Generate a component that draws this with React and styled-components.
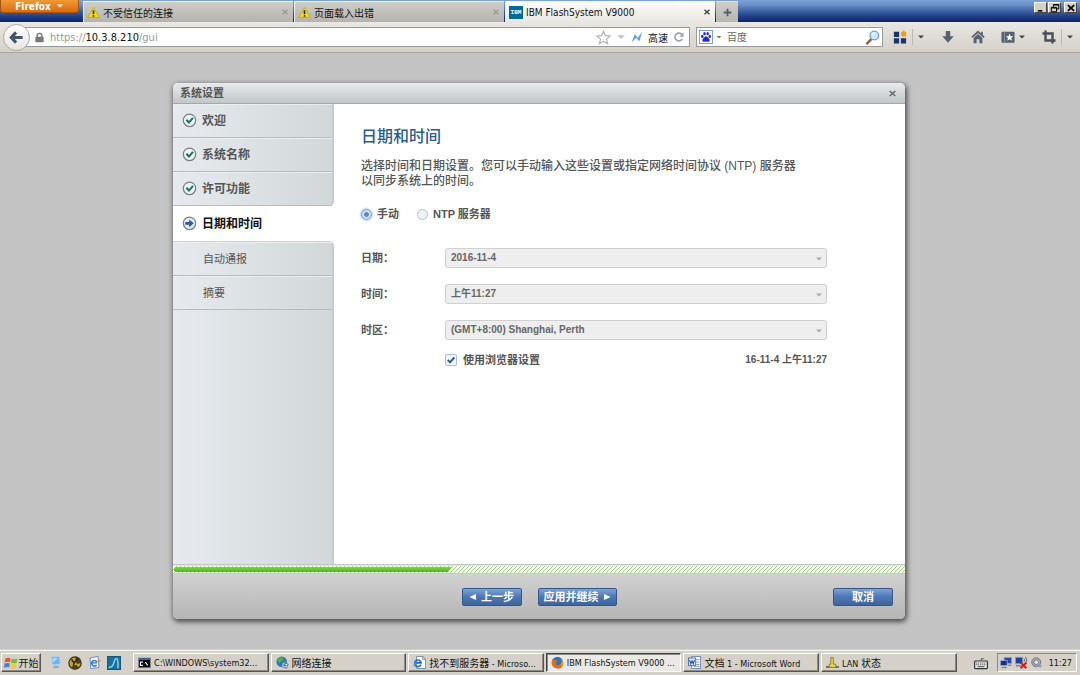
import React, { useState } from 'react';
import styled, { createGlobalStyle } from 'styled-components';

const tabs = [
	{ title: '不受信任的连接', icon: 'warning' },
	{ title: '页面载入出错', icon: 'warning' },
	{ title: 'IBM FlashSystem V9000', icon: 'ibm', active: true },
];

const doneSteps = ['欢迎', '系统名称', '许可功能'];
const nextSteps = ['自动通报', '摘要'];

const tasks = [
	{ title: 'C:\\WINDOWS\\system32...', icon: 'cmd' },
	{ title: '网络连接', icon: 'globe' },
	{ title: '找不到服务器 - Microso...', icon: 'ie' },
	{ title: 'IBM FlashSystem V9000 ...', icon: 'firefox', active: true },
	{ title: '文档 1 - Microsoft Word', icon: 'word' },
	{ title: 'LAN 状态', icon: 'lan' },
];

const icons = {
	warning: (
		<>
			<path d="M8 2 L15 14 H1 Z" fill="#f7dc1b" stroke="#c9a400" strokeLinejoin="round" />
			<path d="M8 5.5 V10" stroke="#222" strokeWidth="2" />
			<circle cx="8" cy="12.2" r="1.1" fill="#222" />
		</>
	),
	cmd: (
		<>
			<rect x="0.5" y="2.5" width="15" height="12" fill="#000" stroke="#8d97a5" />
			<rect x="1" y="3" width="14" height="2" fill="#3c6cc0" />
			<path d="M6 7.5 H3 V11.5 H6 M7.5 8.5 V9 M7.5 11 V11.5 M9 7.5 L12 11.5" stroke="#fff" strokeWidth="1.4" fill="none" />
		</>
	),
	globe: (
		<>
			<circle cx="7" cy="7" r="6.5" fill="#2b78c9" />
			<path d="M3 3 Q7 0 9 3 Q10 6 6 6 Q5 9 3 8 Q1 5 3 3 Z M9 8 L12 6 L13 9 L10 12 Z" fill="#4fb53b" />
			<path d="M8 8 L15 10 L13 15 L7 13 Z" fill="#dfe9f5" stroke="#47648c" />
			<path d="M9 10 L13 11 L12 13 L9 12 Z" fill="#2d59a8" />
		</>
	),
	ie: (
		<>
			<path d="M4.5 0.5 H12 L15.5 4 V15.5 H4.5 Z" fill="#fff" stroke="#5f718b" />
			<path d="M12 0.5 V4 H15.5" fill="none" stroke="#5f718b" />
			<path d="M9.8 10.5 A4 4 0 1 1 10 8.5 H3" fill="none" stroke="#1d6ad0" strokeWidth="2" />
			<path d="M1 13 Q0 9 9 4" fill="none" stroke="#63a7ea" />
		</>
	),
	firefox: (
		<>
			<circle cx="8" cy="8" r="7" fill="#2c75b7" />
			<path d="M2 4 Q3 6 5 5 Q8 5 8 7 Q5 7 6 10 Q8 13 11 10 Q14 7 12 3 Q16 6 15 10 Q13 16 8 15.5 Q1 15 0.7 8 Q1 5 2 4 Z" fill="#e86c13" />
			<path d="M12 3 Q17 9 12 13 Q15 8 12 3 Z" fill="#fbbf27" />
		</>
	),
	word: (
		<>
			<path d="M4.5 0.5 H15.5 V15.5 H4.5 Z" fill="#fff" stroke="#4c6da6" />
			<path d="M10 4.5 H14 M10 7.5 H14 M10 10.5 H14 M7 13 H14" stroke="#6886bd" />
			<rect x="0.5" y="2.5" width="9" height="9" fill="#e4edfb" stroke="#355a9e" />
			<path d="M2 5 L3.5 9.5 L5 6 L6.5 9.5 L8 5" fill="none" stroke="#234f9c" strokeWidth="1.3" />
		</>
	),
	lan: (
		<>
			<path d="M0 13.5 H16" stroke="#333" strokeWidth="1.5" />
			<path d="M6 2 H9 V10 H12 V14 H4 V10 H6 Z" fill="#f0d93f" stroke="#77702f" />
		</>
	),
	windows: (
		<>
			<path d="M1.5 3 Q4 1 7.5 2.5 L6.8 7.3 Q4 6 0.8 7.5 Z" fill="#e8562a" />
			<path d="M8.6 3 Q12 4.3 15.2 2.6 L14.4 7.6 Q11 9 7.9 7.8 Z" fill="#7bb83a" />
			<path d="M0.6 8.7 Q4 7.2 6.6 8.5 L5.9 13.2 Q3 12 0 13.6 Z" fill="#3f7fdc" />
			<path d="M7.7 9 Q11 10.2 14.2 8.8 L13.4 13.7 Q10 15 7 13.8 Z" fill="#f6c62b" />
		</>
	),
	desktop: (
		<>
			<path d="M3 1 L13 0.5 L14 10 L4 11 Z" fill="#6fb3ef" stroke="#b7d3ea" />
			<path d="M4 3 L11 2 L5 8 Z" fill="#b5dcfb" />
			<path d="M6 12 H13 L11 15 H5 Z" fill="#98a8ba" />
		</>
	),
	keyDisc: (
		<>
			<circle cx="8" cy="8" r="7" fill="#c9a52a" stroke="#3a3114" strokeWidth="1.4" />
			<path d="M8 1 A7 7 0 0 1 15 8 L10 9 Z M3 13 A7 7 0 0 0 13 13 L9 10 Z" fill="#4a4020" />
			<path d="M4 4 L7 8 L11 3 M7 8 L6 12" stroke="#2c2610" strokeWidth="1.8" fill="none" />
		</>
	),
	mail: (
		<>
			<path d="M2.5 2.5 L12.5 0.5 L13.5 14 L3.5 15.5 Z" fill="#f3f8ff" stroke="#4a7fbd" />
			<path d="M11 7.5 A3.4 3.4 0 1 0 10.5 11 M5 8.5 H11" stroke="#2171d0" strokeWidth="1.7" fill="none" />
			<path d="M12 4 L16 6 L12 8 Z" fill="#ed7d31" />
		</>
	),
	wave: (
		<>
			<rect x="0.5" y="0.5" width="15" height="15" fill="#16719e" stroke="#0b4f73" />
			<path d="M2 13 Q7 13 8 7 Q9 3 11 3 Q13 3 12.5 14" stroke="#9bdcf0" strokeWidth="1.5" fill="none" />
		</>
	),
	keyboard: (
		<>
			<path d="M8 5 Q8 2 11 3" stroke="#333" fill="none" />
			<rect x="0.7" y="5.7" width="14.6" height="8.6" rx="1" fill="#eee" stroke="#333" strokeWidth="1.4" />
			<path d="M2.5 8 H13.5 M2.5 10 H13.5" stroke="#333" strokeDasharray="1.3 1" />
			<path d="M4 12.2 H12" stroke="#333" />
		</>
	),
	network: (
		<>
			<rect x="5.5" y="0.5" width="10" height="8" fill="#2747ad" stroke="#8fa4cf" />
			<rect x="0.5" y="4.5" width="9" height="7" fill="#1b2f80" stroke="#9fb0d5" />
			<path d="M2 14 H9 M11 11 H15" stroke="#7f8898" strokeWidth="2" />
		</>
	),
	networkOff: (
		<>
			<rect x="0.5" y="1.5" width="9" height="8" fill="#223f9b" stroke="#8fa4cf" />
			<path d="M1 12 H8" stroke="#7f8898" strokeWidth="2" />
			<path d="M11 3 Q13 5 11 7 M13 1 Q16 5 13 9" stroke="#555" fill="none" />
			<path d="M7 8 L14 15 M14 8 L7 15" stroke="#d91818" strokeWidth="2.4" />
		</>
	),
	sound: (
		<>
			<circle cx="7" cy="7" r="6" fill="#a8abb0" stroke="#5e6167" />
			<circle cx="7" cy="7" r="3" fill="#e5e7ea" stroke="#63666c" />
			<path d="M8 11 L14 13" stroke="#8b9bd0" strokeWidth="3" />
		</>
	),
	star: <path d="M8 1.3 L10 6 L15 6.4 L11.2 9.7 L12.4 14.6 L8 12 L3.6 14.6 L4.8 9.7 L1 6.4 L6 6 Z" fill="#fff" stroke="#b4b4b4" strokeWidth="1.3" />,
	bolt: <path d="M1 15 L5 4 L9 9 L15 1 L11 14 L7 9 Z" fill="#5d9ee8" />,
	reload: (
		<>
			<path d="M12.4 10.5 A5.2 5.2 0 1 1 12 4.8" fill="none" stroke="#98a1ab" strokeWidth="2.2" />
			<path d="M14 1.5 V7.5 H8.5 Z" fill="#98a1ab" />
		</>
	),
	lock: (
		<>
			<path d="M4.5 8 V5.5 A3.5 3.5 0 0 1 11.5 5.5 V8" fill="none" stroke="#777" strokeWidth="2" />
			<rect x="2" y="7" width="12" height="8" rx="1" fill="#777" />
		</>
	),
	back: <path d="M7.5 2.5 L2.5 8 L7.5 13.5 M3 8 H14.5" fill="none" stroke="#46566a" strokeWidth="3.4" />,
	paw: (
		<>
			<rect x="0.6" y="0.6" width="14.8" height="14.8" fill="#fff" stroke="#6f95c9" />
			<g fill="#2227d8">
				<ellipse cx="3.8" cy="7.3" rx="1.4" ry="1.9" />
				<ellipse cx="6.3" cy="4.2" rx="1.4" ry="1.9" />
				<ellipse cx="9.9" cy="4.2" rx="1.4" ry="1.9" />
				<ellipse cx="12.3" cy="7.3" rx="1.4" ry="1.9" />
				<path d="M8 7 Q10 7.2 11 9.5 Q13 11 11.8 13 Q10.5 14 8 13 Q5.5 14 4.2 13 Q3 11 5 9.5 Q6 7.2 8 7 Z" />
			</g>
		</>
	),
	search: (
		<>
			<path d="M7 9.5 L1.5 15" stroke="#9a5b3a" strokeWidth="2.6" />
			<circle cx="10" cy="5.8" r="4.6" fill="#cfe7fb" stroke="#78a6d8" strokeWidth="1.5" />
			<path d="M7.5 5 Q8.5 3 10.5 3" stroke="#fff" strokeWidth="1.3" fill="none" />
		</>
	),
	apps: (
		<>
			<path d="M1 2 H7 V8 H1 Z M1 9.5 H7 V15.5 H1 Z M9 9.5 H15 V15.5 H9 Z" fill="#173569" />
			<path d="M9 3 L12 0.5 L15.5 3 L14.5 7.5 L10 7.5 Z" fill="#f39a16" />
		</>
	),
	download: <path d="M5.5 1 H10.5 V7 H14.5 L8 14.5 L1.5 7 H5.5 Z" fill="#566270" />,
	home: (
		<>
			<path d="M1 8.5 L8 2 L15 8.5" fill="none" stroke="#566270" strokeWidth="2" />
			<path d="M11.5 2 H13.5 V6 L11.5 4.5 Z M3 9 L8 4.6 L13 9 V15 H9.6 V10.5 H6.4 V15 H3 Z" fill="#566270" />
		</>
	),
	bookmarks: (
		<>
			<rect x="0.5" y="2" width="15" height="12.5" rx="1" fill="#566270" />
			<path d="M4 2 V14.5" stroke="#8c96a0" />
			<path d="M9.8 4 L11 7 L14 7.2 L11.7 9.2 L12.5 12.3 L9.8 10.6 L7.1 12.3 L7.9 9.2 L5.6 7.2 L8.6 7 Z" fill="#fff" />
		</>
	),
	crop: <path d="M4 0.5 V12 H15.5 M0.5 4 H12 V15.5" fill="none" stroke="#4a4f57" strokeWidth="2.8" />,
	plus: <path d="M8 2.5 V13.5 M2.5 8 H13.5" stroke="#4f5f71" strokeWidth="2.6" />,
	close: <path d="M3 3.5 L13 12.5 M13 3.5 L3 12.5" stroke="currentColor" strokeWidth="2.8" />,
	minimize: <path d="M3 12.5 H10" stroke="#000" strokeWidth="2.6" />,
	restore: <path d="M5.5 6 V2.5 H14 V9.5 H11 M2 7 H10.5 V14 H2 Z M2 8 H10.5 M5.5 3.2 H14" fill="none" stroke="#000" strokeWidth="1.6" />,
	caret: <path d="M2 5 H14 L8 11 Z" fill="currentColor" />,
	left: <path d="M14 2 V14 L1 8 Z" fill="currentColor" />,
	right: <path d="M2 2 V14 L15 8 Z" fill="currentColor" />,
	done: (
		<>
			<circle cx="8" cy="8.6" r="6.6" fill="#555b60" />
			<circle cx="8" cy="7.8" r="6.6" fill="#f0f3f4" stroke="#7c8388" strokeWidth="1.3" />
			<path d="M4.7 7.2 L7.4 10.2 L11.7 5.2" fill="none" stroke="#18735c" strokeWidth="2.2" />
		</>
	),
	current: (
		<>
			<circle cx="8" cy="8.6" r="6.6" fill="#555b60" />
			<circle cx="8" cy="7.8" r="6.6" fill="#e4ebf4" stroke="#7c8388" strokeWidth="1.3" />
			<path d="M3.4 6.4 H7.6 V3.6 L12.6 7.8 L7.6 12 V9.2 H3.4 Z" fill="#2c5b9e" />
		</>
	),
};

const Icon = ({ name, size = 13 }) => (
	<Svg viewBox="0 0 16 16" width={size} height={size} aria-hidden="true">
		{icons[name]}
	</Svg>
);

const DropDown = ({ id, label, value }) => (
	<Field>
		<FieldLabel htmlFor={id}>{label}</FieldLabel>
		<SelectBox>
			<Select id={id} defaultValue={value} disabled>
				<option value={value}>{value}</option>
			</Select>
			<Arrow>
				<Icon name="caret" size={8} />
			</Arrow>
		</SelectBox>
	</Field>
);

const Browser = () => (
	<header>
		<TitleBar>
			<FirefoxButton>
				Firefox <Icon name="caret" size={8} />
			</FirefoxButton>
			<TabList>
				{tabs.map(({ title, icon, active }) => (
					<Tab key={title} $active={active}>
						{icon === 'ibm' ? <IbmLogo>IBM</IbmLogo> : <Icon name={icon} />}
						<TabTitle>{title}</TabTitle>
						<TabClose $active={active} aria-label="关闭标签页">
							<Icon name="close" size={8} />
						</TabClose>
					</Tab>
				))}
				<NewTab aria-label="新标签页">
					<Icon name="plus" size={11} />
				</NewTab>
			</TabList>
			<WindowButtons>
				<WindowButton aria-label="最小化">
					<Icon name="minimize" size={10} />
				</WindowButton>
				<WindowButton aria-label="还原">
					<Icon name="restore" size={10} />
				</WindowButton>
				<WindowButton aria-label="关闭" $last>
					<Icon name="close" size={10} />
				</WindowButton>
			</WindowButtons>
		</TitleBar>

		<NavBar>
			<BackButton aria-label="后退">
				<Icon name="back" size={15} />
			</BackButton>
			<UrlBox>
				<Icon name="lock" size={11} />
				<Url>
					https://<b>10.3.8.210</b>/gui
				</Url>
				<Icon name="star" size={15} />
				<Pale>
					<Icon name="caret" size={10} />
				</Pale>
				<Icon name="bolt" size={12} />
				<span>高速</span>
				<ToolButton aria-label="刷新">
					<Icon name="reload" size={12} />
				</ToolButton>
			</UrlBox>
			<SearchBox>
				<Icon name="paw" size={14} />
				<Icon name="caret" size={6} />
				<SearchInput aria-label="搜索" placeholder="百度" />
				<Icon name="search" size={15} />
			</SearchBox>
			<Tools>
				<ToolButton aria-label="应用">
					<Icon name="apps" size={14} />
				</ToolButton>
				<Split aria-label="更多应用">
					<Icon name="caret" size={8} />
				</Split>
				<ToolButton aria-label="下载">
					<Icon name="download" size={14} />
				</ToolButton>
				<ToolButton aria-label="主页">
					<Icon name="home" size={14} />
				</ToolButton>
				<ToolButton aria-label="书签">
					<Icon name="bookmarks" size={14} />
					<Icon name="caret" size={8} />
				</ToolButton>
				<ToolButton aria-label="截图">
					<Icon name="crop" size={14} />
				</ToolButton>
				<Split aria-label="截图选项">
					<Icon name="caret" size={8} />
				</Split>
			</Tools>
		</NavBar>
	</header>
);

const Wizard = () => {
	const [mode, setMode] = useState('manual');
	const [useBrowser, setUseBrowser] = useState(true);

	return (
		<Dialog role="dialog" aria-labelledby="dialog-title">
			<DialogTitle>
				<span id="dialog-title">系统设置</span>
				<DialogClose aria-label="关闭">
					<Icon name="close" size={9} />
				</DialogClose>
			</DialogTitle>

			<DialogBody>
				<Steps>
					<StepGroup>
						{doneSteps.map((step) => (
							<Step key={step}>
								<Icon name="done" size={15} />
								{step}
							</Step>
						))}
					</StepGroup>
					<CurrentStep>
						<Icon name="current" size={15} />
						日期和时间
					</CurrentStep>
					<StepGroup $rest>
						{nextSteps.map((step) => (
							<Step key={step} $next>
								{step}
							</Step>
						))}
					</StepGroup>
				</Steps>

				<Pane>
					<Heading>日期和时间</Heading>
					<Intro>
						选择时间和日期设置。您可以手动输入这些设置或指定网络时间协议 (NTP) 服务器以同步系统上的时间。
					</Intro>

					<Options>
						<Option>
							<Radio
								name="mode"
								checked={mode === 'manual'}
								onChange={() => setMode('manual')}
							/>
							手动
						</Option>
						<Option>
							<Radio
								name="mode"
								checked={mode === 'ntp'}
								onChange={() => setMode('ntp')}
							/>
							NTP 服务器
						</Option>
					</Options>

					<Fields>
						<DropDown id="date" label="日期：" value="2016-11-4" />
						<DropDown id="time" label="时间：" value="上午11:27" />
						<DropDown id="zone" label="时区：" value="(GMT+8:00) Shanghai, Perth" />
					</Fields>

					<BrowserRow>
						<Option>
							<Check>
								<CheckInput
									checked={useBrowser}
									onChange={(e) => setUseBrowser(e.target.checked)}
								/>
								{useBrowser && (
									<Tick viewBox="0 0 12 12" aria-hidden="true">
										<path d="M2.8 5.8 L5 8.3 L9.3 3.5" />
									</Tick>
								)}
							</Check>
							使用浏览器设置
						</Option>
						<Now>16-11-4 上午11:27</Now>
					</BrowserRow>
				</Pane>
			</DialogBody>

			<Progress role="progressbar" aria-label="进度" aria-valuenow={38}>
				<ProgressFill />
			</Progress>

			<DialogFooter>
				<FooterCenter>
					<Button>
						<Icon name="left" size={8} />
						上一步
					</Button>
					<Button>
						应用并继续
						<Icon name="right" size={8} />
					</Button>
				</FooterCenter>
				<FooterEnd>
					<Button>取消</Button>
				</FooterEnd>
			</DialogFooter>
		</Dialog>
	);
};

// chinese parts of a task title are set a size larger than the latin ones
const taskTitle = (title) =>
	title
		.split(/([\u4e00-\u9fff]+)/)
		.map((part, index) => (index % 2 ? <Han key={index}>{part}</Han> : part));

const TaskBar = () => (
	<Bar>
		<StartButton>
			<Icon name="windows" size={14} />
			开始
		</StartButton>
		<QuickLaunch>
			<Icon name="desktop" />
			<Icon name="keyDisc" size={14} />
			<Icon name="mail" />
			<Icon name="wave" size={14} />
		</QuickLaunch>
		<TaskList>
			{tasks.map(({ title, icon, active }) => (
				<Task key={title} $active={active}>
					<Icon name={icon} />
					<span>{taskTitle(title)}</span>
				</Task>
			))}
		</TaskList>
		<Icon name="keyboard" size={14} />
		<Tray>
			<Icon name="network" size={12} />
			<Icon name="networkOff" />
			<Icon name="sound" size={12} />
			<Clock>11:27</Clock>
		</Tray>
	</Bar>
);

const App = () => (
	<Screen>
		<GlobalStyle />
		<Browser />
		<Main>
			<Wizard />
		</Main>
		<TaskBar />
	</Screen>
);

export default App;

const uiFont = '"DejaVu Sans Condensed", "DejaVu Sans", "Noto Sans CJK SC", sans-serif';
const pageFont = '"Liberation Sans", "Noto Sans CJK SC", sans-serif';

const GlobalStyle = createGlobalStyle`
	* {
		box-sizing: border-box;
	}

	body {
		margin: 0;
		font: 10px ${uiFont};
		color: #111;
	}

	button, input, select {
		font: inherit;
		color: inherit;
	}

	button {
		display: flex;
		align-items: center;
		justify-content: center;
		padding: 0;
		border: 0;
		background: none;
		white-space: nowrap;
	}
`;

const Svg = styled.svg`
	display: block;
	flex: none;
`;

const Screen = styled.div`
	display: flex;
	flex-direction: column;
	min-height: 100vh;
	background: #c3c3c3;
`;

/* browser window */

const TitleBar = styled.div`
	display: flex;
	height: 22px;
	background: linear-gradient(#7ba3d9, #6c93c9 20%, #2b4c92 65%, #0f2168);
`;

const FirefoxButton = styled.button`
	width: 79px;
	height: 13px;
	gap: 5px;
	border: 1px solid #a8530d;
	border-top: 0;
	border-radius: 0 0 3px 3px;
	background: linear-gradient(#f09a35, #dc6c0d);
	color: #fff;
	font-weight: 700;
`;

const TabList = styled.div`
	display: flex;
	flex: 1;
	gap: 1px;
	padding: 1px 0 0 4px;
`;

const Tab = styled.div`
	display: flex;
	align-items: center;
	flex: 0 1 210px;
	min-width: 0;
	gap: 3px;
	padding: 0 4px 0 3px;
	border-left: 1px solid #eee;
	border-top: 1px solid #f4f4f2;
	background: ${({ $active }) =>
		$active ? 'linear-gradient(#fbfbfa, #e9e7e2)' : 'linear-gradient(#cfcdc8, #b5b3ae)'};
`;

const TabTitle = styled.span`
	flex: 1;
	overflow: hidden;
	white-space: nowrap;
	text-overflow: ellipsis;
`;

const TabClose = styled.button`
	color: ${({ $active }) => ($active ? '#444' : '#999')};
`;

const NewTab = styled.button`
	width: 22px;
	border-top: 1px solid #e4e3df;
	background: linear-gradient(#cfcdc8, #b9b7b2);
`;

const IbmLogo = styled.span`
	width: 14px;
	background: #006a9b;
	color: #fff;
	font: 700 6px/13px "Liberation Mono", monospace;
	text-align: center;
`;

const WindowButtons = styled.div`
	display: flex;
	gap: 1px;
	padding: 2px 3px 0 0;
`;

const WindowButton = styled.button`
	width: 13px;
	height: 11px;
	margin-left: ${({ $last }) => ($last ? 2 : 0)}px;
	border: 1px solid;
	border-color: #fff #444 #444 #fff;
	background: #d5d1c9;
	color: #000;
`;

const NavBar = styled.div`
	display: flex;
	align-items: center;
	height: 31px;
	padding: 0 6px 0 3px;
	border-bottom: 1px solid #aaa69f;
	background: linear-gradient(#e9e7e3, #d5d1c9);
`;

const BackButton = styled.button`
	z-index: 1;
	width: 27px;
	height: 27px;
	border: 1px solid #aaa;
	border-radius: 50%;
	background: linear-gradient(#fff, #e6e5e2);
`;

const inputBox = `
	display: flex;
	align-items: center;
	height: 20px;
	border: 1px solid #999;
	background: #fff;
`;

const UrlBox = styled.div`
	${inputBox}
	flex: 1;
	gap: 5px;
	margin-left: -10px;
	padding: 0 4px 0 14px;
	border-left: 0;
`;

const Url = styled.span`
	flex: 1;
	color: #999;
	font-size: 11px;

	b {
		color: #111;
		font-weight: 400;
	}
`;

const Pale = styled.span`
	color: #c2c2c2;
`;

const SearchBox = styled.div`
	${inputBox}
	width: 187px;
	gap: 3px;
	margin-left: 6px;
	padding: 0 2px;
	color: #666;
`;

const SearchInput = styled.input`
	flex: 1;
	min-width: 0;
	padding: 0 0 0 2px;
	border: 0;
	outline: 0;
	background: none;

	&::placeholder {
		color: #666;
	}
`;

const Tools = styled.div`
	display: flex;
	align-items: center;
	gap: 16px;
	padding-left: 10px;
	color: #444;
`;

const ToolButton = styled.button`
	gap: 3px;
`;

const Split = styled.button`
	height: 16px;
	margin-left: -11px;
	padding-left: 4px;
	border-left: 1px solid #bbb7b0;
`;

/* setup dialog */

const Main = styled.main`
	display: flex;
	flex: 1;
	justify-content: center;
	padding: 30px 26px 30px 24px;
	font: 700 11px/16px ${pageFont};
	color: #555;
`;

const Dialog = styled.section`
	display: flex;
	flex-direction: column;
	width: 100%;
	max-width: 732px;
	overflow: hidden;
	border-radius: 5px;
	background: #fff;
	box-shadow: 1px 2px 5px 1px rgba(0, 0, 0, 0.6);
`;

const DialogTitle = styled.div`
	display: flex;
	align-items: center;
	justify-content: space-between;
	height: 21px;
	padding: 0 8px 0 7px;
	border-bottom: 1px solid #a3a8aa;
	background: linear-gradient(#e8ebec, #c0c6c9);
`;

const DialogClose = styled.button`
	color: #666;
`;

const DialogBody = styled.div`
	display: flex;
	flex: 1;
`;

const Steps = styled.nav`
	display: flex;
	flex-direction: column;
	width: 161px;
`;

const StepGroup = styled.div`
	flex: ${({ $rest }) => ($rest ? 1 : 'none')};
	border-right: 2px solid #c5cbce;
	border-top: ${({ $rest }) => ($rest ? '1px solid #ccd1d4' : 0)};
	border-radius: ${({ $rest }) => ($rest ? '0 5px 0 0' : '0 0 5px 0')};
	background: linear-gradient(90deg, #e6eaee, #d2d8da);
`;

const Step = styled.div`
	display: flex;
	align-items: center;
	height: 34px;
	gap: 5px;
	padding-left: ${({ $next }) => ($next ? 30 : 9)}px;
	border-bottom: 1px solid #b6bcc0;
	box-shadow: inset 0 1px #eaeeef;
	font-size: ${({ $next }) => ($next ? 11 : 12)}px;
	font-weight: ${({ $next }) => ($next ? 400 : 700)};
`;

const CurrentStep = styled.div`
	display: flex;
	align-items: center;
	height: 35px;
	gap: 5px;
	padding-left: 9px;
	color: #111;
	font-size: 12px;
`;

const Pane = styled.div`
	flex: 1;
	padding: 23px 78px 20px 27px;
`;

const Heading = styled.h1`
	margin: 0 0 12px;
	color: #2a5c94;
	font-size: 16px;
	line-height: 20px;
	font-weight: 500;
`;

const Intro = styled.p`
	max-width: 440px;
	margin: 0;
	font-size: 12px;
	line-height: 15px;
	font-weight: 500;
`;

const Options = styled.div`
	display: flex;
	gap: 18px;
	margin: 17px 0 26px;
`;

const Option = styled.label`
	display: flex;
	align-items: center;
	gap: 5px;
`;

const Radio = styled.input.attrs({ type: 'radio' })`
	appearance: none;
	width: 11px;
	height: 11px;
	margin: 0;
	border: 1px solid ${({ checked }) => (checked ? '#6f9bd0' : '#b3c0d0')};
	border-radius: 50%;
	background: ${({ checked }) =>
		checked ? 'radial-gradient(#5787c6 30%, #cfe0f5 45%)' : '#eef2f7'};
	box-shadow: ${({ checked }) => (checked ? '0 0 2px 1px #b9d2f0' : 'none')};
`;

const Fields = styled.div`
	display: flex;
	flex-direction: column;
	gap: 16px;
`;

const Field = styled.div`
	display: flex;
	align-items: center;
`;

const FieldLabel = styled.label`
	width: 84px;
`;

const SelectBox = styled.div`
	position: relative;
	flex: 1;
`;

const Select = styled.select`
	display: block;
	appearance: none;
	width: 100%;
	height: 20px;
	padding: 0 20px 0 5px;
	border: 1px solid #d0d0d0;
	border-radius: 3px;
	background: #eee;
	color: #666;
	font-size: 10px;
	opacity: 1;
`;

const Arrow = styled.span`
	position: absolute;
	top: 7px;
	right: 4px;
	color: #aaa;
	pointer-events: none;
`;

const BrowserRow = styled.div`
	display: flex;
	justify-content: space-between;
	margin-top: 12px;
	padding-left: 84px;
`;

const Now = styled.span`
	font-size: 10px;
`;

const Check = styled.span`
	position: relative;
	width: 12px;
	height: 12px;
	margin-right: 1px;
`;

const CheckInput = styled.input.attrs({ type: 'checkbox' })`
	display: block;
	appearance: none;
	width: 12px;
	height: 12px;
	margin: 0;
	border: 1px solid #a9bdd5;
	border-radius: 2px;
	background: #f3f7fb;
`;

const Tick = styled.svg`
	position: absolute;
	inset: 0;
	fill: none;
	stroke: #2c5b9e;
	stroke-width: 2;
	pointer-events: none;
`;

const Progress = styled.div`
	height: 10px;
	padding: 2px 0 2px 1px;
	border-top: 1px solid #c6c6c6;
	border-bottom: 1px solid #c9c9c9;
	background: linear-gradient(135deg, #9bd97e 13%, #fff 13% 50%, #9bd97e 50% 63%, #fff 63%) 0 0 / 4px 4px;
	box-shadow: inset 0 1px #e2e2e2;
`;

const ProgressFill = styled.div`
	width: 38%;
	height: 5px;
	border-radius: 2px 0 0 2px;
	background: linear-gradient(#7fd34c, #50b41f);
	clip-path: polygon(0 0, 100% 0, calc(100% - 4px) 100%, 0 100%);
`;

const DialogFooter = styled.footer`
	display: grid;
	grid-template-columns: 1fr auto 1fr;
	align-items: center;
	height: 45px;
	padding: 0 12px;
	background: linear-gradient(#d2d1d2, #b5b5b5);
`;

const FooterCenter = styled.div`
	display: flex;
	grid-column: 2;
	gap: 16px;
`;

const FooterEnd = styled.div`
	display: flex;
	justify-content: flex-end;
`;

const Button = styled.button`
	min-width: 60px;
	height: 18px;
	gap: 4px;
	padding: 0 5px;
	border: 1px solid #35568a;
	border-radius: 2px;
	background: linear-gradient(#7da4d8, #4f7ab5 45%, #3e6399);
	color: #fff;
`;

/* taskbar */

const Bar = styled.footer`
	display: flex;
	align-items: center;
	height: 26px;
	padding: 0 3px 0 1px;
	border-top: 1px solid #d5d1c9;
	background: #d5d1c9;
	box-shadow: inset 0 1px #f6f5f2;
`;

const raised = `
	border: 1px solid;
	border-color: #fff #555 #555 #fff;
	box-shadow: inset -1px -1px #8d8a84;
`;

const StartButton = styled.button`
	${raised}
	width: 40px;
	height: 19px;
	gap: 1px;
`;

const QuickLaunch = styled.div`
	display: flex;
	align-items: center;
	gap: 6px;
	padding: 0 12px 0 8px;
`;

const TaskList = styled.div`
	display: flex;
	flex: 1;
	gap: 2px;
	margin-right: 17px;
`;

const Task = styled.button`
	${raised}
	flex: 1;
	justify-content: flex-start;
	min-width: 0;
	height: 19px;
	gap: 3px;
	padding: 0 2px 0 4px;
	font-size: 9px;

	${({ $active }) =>
		$active &&
		`
		border-color: #444 #fff #fff #444;
		background: #ebe9e5;
		box-shadow: inset 1px 1px #8d8a84;
	`}
`;

const Han = styled.span`
	font-size: 10px;
`;

const Tray = styled.div`
	display: flex;
	align-items: center;
	height: 19px;
	gap: 3px;
	margin-left: 9px;
	padding: 0 4px 0 2px;
	border: 1px solid;
	border-color: #8d8a84 #fff #fff #8d8a84;
`;

const Clock = styled.span`
	padding-left: 3px;
	font-size: 9px;
`;
